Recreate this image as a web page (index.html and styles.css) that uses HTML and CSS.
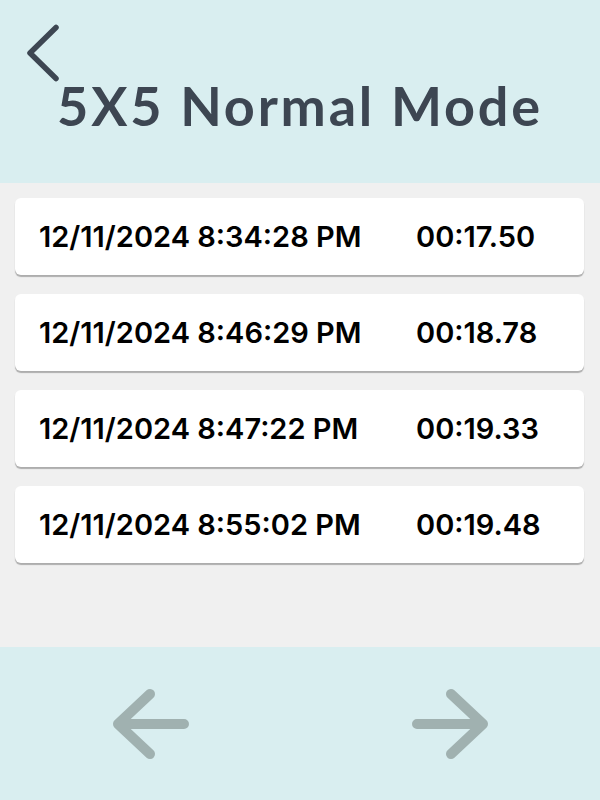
FILE: index.html
```html
<!DOCTYPE html>
<html>
<head>
  <link rel="stylesheet" href="styles.css">
</head>
<body>
  <div class="app">
    <header class="top-bar">
      <button class="back-button" aria-label="Back">
        <svg width="40" height="64" viewBox="0 0 40 64">
          <polyline points="32,7.5 6,33 32,58.5" fill="none" stroke="#3d4652" stroke-width="5.5" stroke-linecap="round" stroke-linejoin="round"/>
        </svg>
      </button>
      <h1>5X5 Normal Mode</h1>
    </header>

    <main class="score-list">
      <div class="score-row">
        <span class="score-date">12/11/2024 8:34:28 PM</span>
        <span class="score-time">00:17.50</span>
      </div>
      <div class="score-row">
        <span class="score-date">12/11/2024 8:46:29 PM</span>
        <span class="score-time">00:18.78</span>
      </div>
      <div class="score-row">
        <span class="score-date">12/11/2024 8:47:22 PM</span>
        <span class="score-time">00:19.33</span>
      </div>
      <div class="score-row">
        <span class="score-date">12/11/2024 8:55:02 PM</span>
        <span class="score-time">00:19.48</span>
      </div>
    </main>

    <footer class="pager">
      <button class="pager-button" aria-label="Previous page">
        <svg width="78" height="72" viewBox="0 0 78 72">
          <path d="M73 36H7M39 6L7 36l32 30" fill="none" stroke="#a0b1b0" stroke-width="10" stroke-linecap="round" stroke-linejoin="round"/>
        </svg>
      </button>
      <button class="pager-button" aria-label="Next page">
        <svg width="78" height="72" viewBox="0 0 78 72">
          <path d="M5 36h66M39 6l32 30-32 30" fill="none" stroke="#a0b1b0" stroke-width="10" stroke-linecap="round" stroke-linejoin="round"/>
        </svg>
      </button>
    </footer>
  </div>
</body>
</html>
```

FILE: styles.css
```css
body {
  margin: 0;
  background-color: #f0f0f0;
  font-family: Inter, "Liberation Sans", sans-serif;
}

.app {
  display: flex;
  flex-direction: column;
  height: 800px;
}

.top-bar {
  position: relative;
  height: 183px;
  background-color: #d9eef0;
}

.back-button {
  position: absolute;
  top: 20px;
  left: 24px;
  padding: 0;
  border: none;
  background: none;
  cursor: pointer;
}

.back-button svg {
  display: block;
}

.top-bar h1 {
  margin: 0;
  padding-top: 78px;
  text-align: center;
  font-family: Lato, "Liberation Sans", sans-serif;
  font-size: 54px;
  font-weight: 700;
  line-height: 56px;
  letter-spacing: 2.8px;
  color: #3d4652;
}

.score-list {
  flex: 1;
  display: flex;
  flex-direction: column;
  gap: 19px;
  padding: 15px 16px 0 15px;
}

.score-row {
  display: flex;
  align-items: center;
  height: 77px;
  padding-left: 24px;
  background-color: #ffffff;
  border-radius: 6px;
  box-shadow: 0 2px 1px rgba(0, 0, 0, 0.28);
  font-size: 29px;
  font-weight: 600;
  color: #000000;
}

.score-date {
  width: 377px;
}

.pager {
  display: flex;
  justify-content: space-between;
  align-items: center;
  height: 153px;
  padding: 0 110px 0 111px;
  background-color: #d9eef0;
}

.pager-button {
  padding: 0;
  border: none;
  background: none;
  cursor: pointer;
}

.pager-button svg {
  display: block;
}
```
